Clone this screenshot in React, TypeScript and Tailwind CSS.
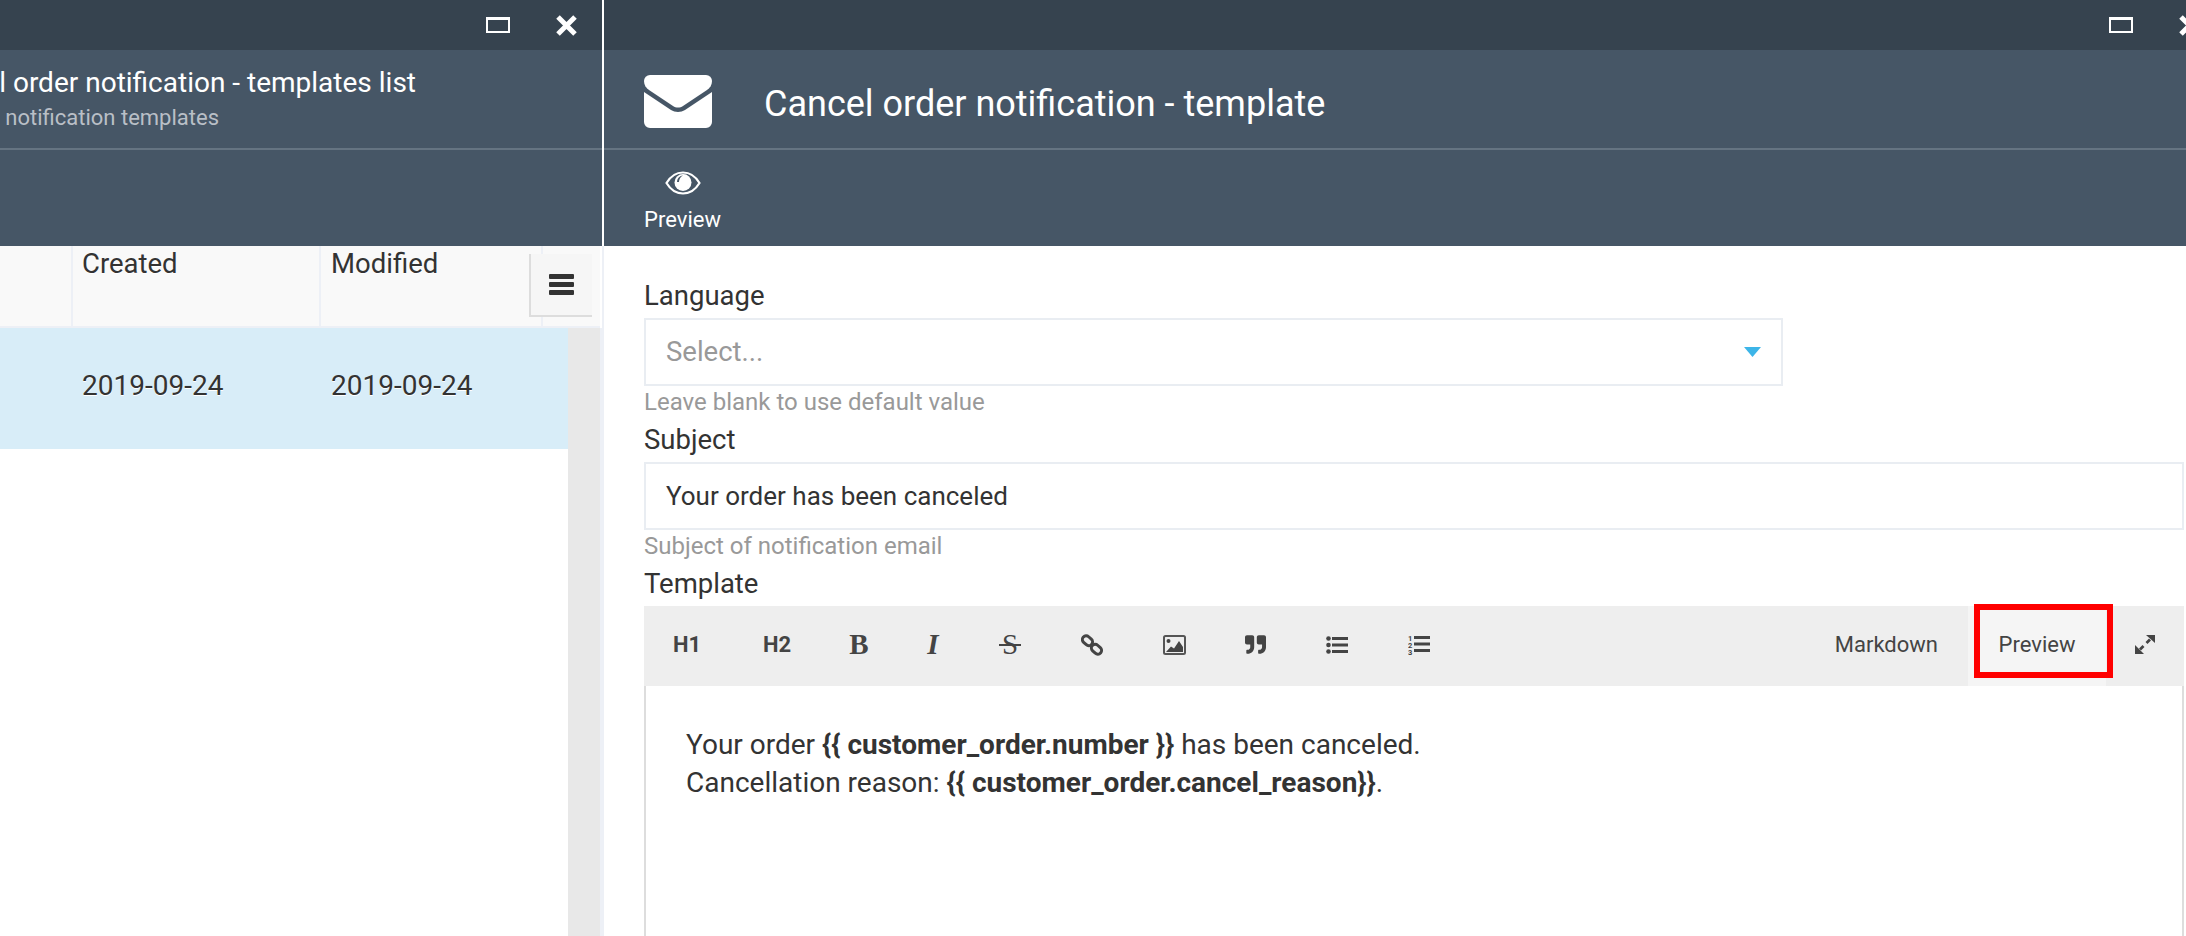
import { FaQuoteRight } from "react-icons/fa";

function WindowButtons() {
  return (
    <div className="flex h-[50px] shrink-0 items-center justify-end gap-[45px] bg-[#36434f] pr-[24px]">
      <div className="h-[16px] w-[24px] border-2 border-t-[3px] border-white" />
      <svg width="23" height="21" viewBox="0 0 23 21">
        <path d="M3 2 20 19M20 2 3 19" stroke="#fff" strokeWidth="5" />
      </svg>
    </div>
  );
}

function MailIcon() {
  return (
    <svg width="68" height="54" viewBox="0 0 68 54" fill="#fff" className="shrink-0">
      <path d="M6 0H62a6 6 0 0 1 6 6c0 4-2 7-5 9L39 31c-3 2-7 2-10 0L5 15C2 13 0 10 0 6a6 6 0 0 1 6-6Z" />
      <path d="M0 17 27 35c4 2.6 10 2.6 14 0L68 17V47a6 6 0 0 1-6 6H6a6 6 0 0 1-6-6Z" />
    </svg>
  );
}

function EyeIcon() {
  return (
    <svg width="36" height="24" viewBox="0 0 36 24">
      <path
        d="M1.5 12C6 4.5 12 1.5 18 1.5S30 4.5 34.5 12C30 19.5 24 22.5 18 22.5S6 19.5 1.5 12Z"
        fill="none"
        stroke="#fff"
        strokeWidth="2.2"
      />
      <circle cx="18" cy="11.5" r="8.5" fill="#fff" />
      <path d="M12 11c0-3 2-6 6-6.5-3 1.5-4 4-4 6.5Z" fill="#465666" />
    </svg>
  );
}

function LinkIcon() {
  return (
    <svg width="22" height="22" viewBox="0 0 22 22" fill="none" stroke="#444" strokeWidth="3">
      <rect x="1" y="3" width="11" height="7.5" rx="3.7" transform="rotate(42 6.5 6.7)" />
      <rect x="10" y="11.5" width="11" height="7.5" rx="3.7" transform="rotate(42 15.5 15.2)" />
    </svg>
  );
}

function ImageIcon() {
  return (
    <svg width="23" height="20" viewBox="0 0 23 20">
      <rect x="1" y="1" width="21" height="18" rx="1.5" fill="none" stroke="#555" strokeWidth="2" />
      <circle cx="5.5" cy="6" r="2" fill="#444" />
      <path d="M3 17 8 11.5 11 13.5 16 6 20 12V17Z" fill="#444" />
    </svg>
  );
}

function ListIcon() {
  return (
    <svg width="22" height="18" viewBox="0 0 22 18" fill="#444">
      <circle cx="2.5" cy="2.5" r="2.3" />
      <circle cx="2.5" cy="9" r="2.3" />
      <circle cx="2.5" cy="15.5" r="2.3" />
      <rect x="6" y="1" width="16" height="3" />
      <rect x="6" y="7.5" width="16" height="3" />
      <rect x="6" y="14" width="16" height="3" />
    </svg>
  );
}

function NumberedListIcon() {
  return (
    <svg width="22" height="21" viewBox="0 0 22 21" fill="#444">
      <text x="0" y="6.5" fontSize="7.5" fontWeight="700" fontFamily="Roboto">1</text>
      <text x="0" y="13.5" fontSize="7.5" fontWeight="700" fontFamily="Roboto">2</text>
      <text x="0" y="20.5" fontSize="7.5" fontWeight="700" fontFamily="Roboto">3</text>
      <rect x="6" y="2" width="16" height="3" />
      <rect x="6" y="8.5" width="16" height="3" />
      <rect x="6" y="15" width="16" height="3" />
    </svg>
  );
}

function ExpandIcon() {
  return (
    <svg width="20" height="19" viewBox="0 0 20 19" fill="#444">
      <path d="M11 0H20V8Z" />
      <path d="M0 10V19H9Z" />
      <path d="M15 4.5 11.5 8M5 14.5 8.5 11" stroke="#444" strokeWidth="2.8" />
    </svg>
  );
}

function TemplatesList() {
  return (
    <div className="flex w-[602px] shrink-0 flex-col overflow-hidden">
      <WindowButtons />
      <div className="flex h-[100px] shrink-0 flex-col border-b-2 border-[#657482] bg-[#465666] pt-[15px] text-white">
        <div className="flex w-[416px] justify-end whitespace-nowrap">
          <span className="shrink-0 text-[28px] leading-[36px]">
            Cancel order notification - templates list
          </span>
        </div>
        <div className="flex w-[219px] justify-end whitespace-nowrap">
          <span className="shrink-0 text-[22px] leading-[34px] text-[#b9bfc6]">
            Manage notification templates
          </span>
        </div>
      </div>
      <div className="h-[96px] shrink-0 bg-[#465666]" />

      <div className="relative flex h-[82px] w-[600px] shrink-0 border-b-2 border-[#edf0f6] bg-[#f9f9f9] text-[27.5px] leading-[36px] text-[#333] [text-shadow:0_1px_0_#fff]">
        <div className="w-[71px]" />
        <div className="w-[248px] border-l-2 border-[#edf0f6] pl-[9px]">Created</div>
        <div className="w-[222px] border-l-2 border-[#edf0f6] pl-[10px]">Modified</div>
        <div className="flex-1 border-l-2 border-[#edf0f6]" />
        <button className="absolute top-[8px] left-[529px] flex h-[63px] w-[63px] flex-col items-center justify-center gap-[3px] border-b-2 border-l-2 border-[#dddddd] bg-[#f6f6f6]">
          <span className="h-[5px] w-[25px] rounded-[1px] bg-[#333]" />
          <span className="h-[5px] w-[25px] rounded-[1px] bg-[#333]" />
          <span className="h-[5px] w-[25px] rounded-[1px] bg-[#333]" />
        </button>
      </div>

      <div className="flex flex-1">
        <div className="w-[568px]">
          <div className="flex h-[121px] items-center bg-[#d8edf8] pb-[6px] text-[28px] text-[#333] [text-shadow:0_1px_0_#fff]">
            <div className="w-[82px]" />
            <div className="w-[249px]">2019-09-24</div>
            <div>2019-09-24</div>
          </div>
        </div>
        <div className="w-[32px] bg-[#e8e8e8]" />
        <div className="flex-1 bg-[#edf0f6]" />
      </div>
    </div>
  );
}

const toolbarItemClass = "flex h-full shrink-0 items-center justify-center pb-[3px]";

function EditorToolbar() {
  return (
    <div className="flex h-[80px] shrink-0 items-center bg-[#eeeeee] text-[#444]">
      <div className={`${toolbarItemClass} w-[86px] text-[22px] font-bold`}>H1</div>
      <div className={`${toolbarItemClass} w-[94px] text-[22px] font-bold`}>H2</div>
      <div className={`${toolbarItemClass} w-[70px] font-['Liberation_Serif'] text-[29px] font-bold`}>B</div>
      <div className={`${toolbarItemClass} w-[78px] font-['Liberation_Serif'] text-[29px] font-bold italic`}>I</div>
      <div className={`${toolbarItemClass} relative w-[76px] font-['Liberation_Serif'] text-[29px]`}>
        S
        <span className="absolute top-[38px] left-[27px] h-[2px] w-[22px] bg-[#444]" />
      </div>
      <div className={`${toolbarItemClass} w-[88px]`}>
        <LinkIcon />
      </div>
      <div className={`${toolbarItemClass} w-[76px]`}>
        <ImageIcon />
      </div>
      <div className={`${toolbarItemClass} w-[86px]`}>
        <FaQuoteRight size={21} color="#444" />
      </div>
      <div className={`${toolbarItemClass} w-[78px]`}>
        <ListIcon />
      </div>
      <div className={`${toolbarItemClass} w-[86px]`}>
        <NumberedListIcon />
      </div>

      <div className="ml-auto pr-[30px] pb-[3px] text-[22px]">Markdown</div>
      <div className={`${toolbarItemClass} relative w-[138px] bg-[#f5f5f5] text-[22px]`}>
        Preview
        <div className="absolute top-[-2px] left-[6px] h-[74px] w-[139px] border-[6px] border-[#ff0000]" />
      </div>
      <div className={`${toolbarItemClass} w-[78px]`}>
        <ExpandIcon />
      </div>
    </div>
  );
}

function TemplateForm() {
  return (
    <div className="flex w-[1621px] shrink-0 flex-col">
      <WindowButtons />
      <div className="flex h-[100px] shrink-0 items-center gap-[52px] border-b-2 border-[#657482] bg-[#465666] pt-[6px] pl-[40px] text-white">
        <MailIcon />
        <span className="pt-[3px] text-[36px]">Cancel order notification - template</span>
      </div>
      <div className="flex h-[96px] shrink-0 flex-col bg-[#465666] pt-[21px] pl-[40px] text-white">
        <div className="flex w-[77px] flex-col items-center">
          <EyeIcon />
          <span className="mt-[11px] text-[22px] leading-[28px]">Preview</span>
        </div>
      </div>

      <div className="flex flex-1 flex-col gap-y-[4px] bg-white pt-[32px] pr-[41px] pl-[40px] text-[27.5px] text-[#333]">
        <div>
          <div className="leading-[36px]">Language</div>
          <div className="mt-[4px] flex h-[68px] w-[1139px] items-center justify-between border-2 border-[#e9edf2] pr-[20px] pl-[20px] text-[#999]">
            Select...
            <svg width="17" height="10" viewBox="0 0 17 10">
              <path d="M0 0H17L8.5 10Z" fill="#3db5e8" />
            </svg>
          </div>
          <div className="text-[24px] leading-[32px] text-[#999]">Leave blank to use default value</div>
        </div>
        <div>
          <div className="leading-[36px]">Subject</div>
          <div className="mt-[4px] flex h-[68px] items-center border-2 border-[#e9edf2] pl-[20px] text-[26px]">
            Your order has been canceled
          </div>
          <div className="text-[24px] leading-[32px] text-[#999]">Subject of notification email</div>
        </div>
        <div className="flex flex-1 flex-col">
          <div className="leading-[36px]">Template</div>
          <div className="mt-[4px] flex flex-1 flex-col">
            <EditorToolbar />
            <div className="flex-1 border-x-2 border-[#dddddd] pt-[40px] pl-[40px] text-[28px] leading-[38px]">
              <div>
                Your order <b>{"{{ customer_order.number }}"}</b> has been canceled.
              </div>
              <div>
                Cancellation reason: <b>{"{{ customer_order.cancel_reason}}"}</b>.
              </div>
            </div>
          </div>
        </div>
      </div>
    </div>
  );
}

export default function App() {
  return (
    <div className="flex h-[936px] w-[2186px] overflow-hidden bg-white font-['Roboto',sans-serif]">
      <TemplatesList />
      <div className="w-[2px] shrink-0 bg-[linear-gradient(#ffffff_246px,#edf0f6_246px)]" />
      <TemplateForm />
    </div>
  );
}
